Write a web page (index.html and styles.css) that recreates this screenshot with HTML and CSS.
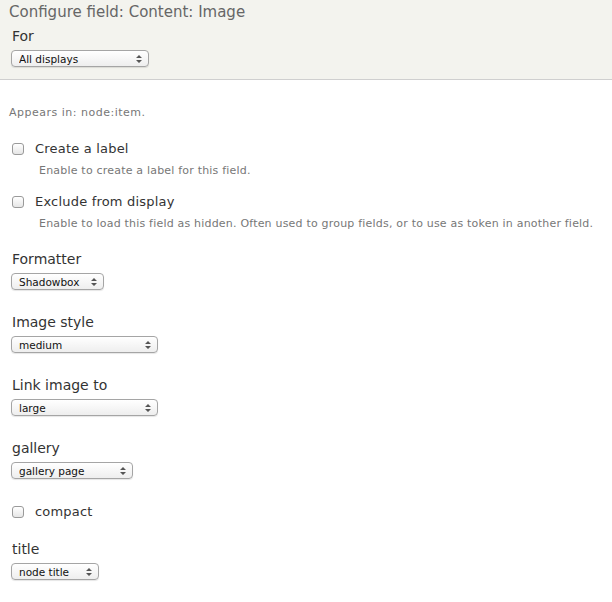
FILE: index.html
```html
<!DOCTYPE html>
<html lang="en">
<head>
  <meta charset="UTF-8">
  <title>Configure field</title>
  <link rel="stylesheet" href="styles.css">
</head>
<body>

  <div class="top-bar">
    <h1>Configure field: Content: Image</h1>
    <div class="field">
      <label>For</label>
      <span class="select-wrap w-for">
        <select><option>All displays</option></select>
        <svg class="arrows" width="6" height="8" viewBox="0 0 6 8"><path d="M3 0L6 3H0z M3 8L0 5H6z" fill="#555"/></svg>
      </span>
    </div>
  </div>

  <div class="settings">
    <p class="appears">Appears in: node:item.</p>

    <div class="check-row">
      <label><input type="checkbox"> Create a label</label>
      <div class="desc">Enable to create a label for this field.</div>
    </div>

    <div class="check-row">
      <label><input type="checkbox"> Exclude from display</label>
      <div class="desc">Enable to load this field as hidden. Often used to group fields, or to use as token in another field.</div>
    </div>

    <div class="field">
      <label>Formatter</label>
      <span class="select-wrap w-formatter">
        <select><option>Shadowbox</option></select>
        <svg class="arrows" width="6" height="8" viewBox="0 0 6 8"><path d="M3 0L6 3H0z M3 8L0 5H6z" fill="#555"/></svg>
      </span>
    </div>

    <div class="field">
      <label>Image style</label>
      <span class="select-wrap w-wide">
        <select><option>medium</option></select>
        <svg class="arrows" width="6" height="8" viewBox="0 0 6 8"><path d="M3 0L6 3H0z M3 8L0 5H6z" fill="#555"/></svg>
      </span>
    </div>

    <div class="field">
      <label>Link image to</label>
      <span class="select-wrap w-wide">
        <select><option>large</option></select>
        <svg class="arrows" width="6" height="8" viewBox="0 0 6 8"><path d="M3 0L6 3H0z M3 8L0 5H6z" fill="#555"/></svg>
      </span>
    </div>

    <div class="field">
      <label>gallery</label>
      <span class="select-wrap w-gallery">
        <select><option>gallery page</option></select>
        <svg class="arrows" width="6" height="8" viewBox="0 0 6 8"><path d="M3 0L6 3H0z M3 8L0 5H6z" fill="#555"/></svg>
      </span>
    </div>

    <div class="check-row compact">
      <label><input type="checkbox"> compact</label>
    </div>

    <div class="field">
      <label>title</label>
      <span class="select-wrap w-title">
        <select><option>node title</option></select>
        <svg class="arrows" width="6" height="8" viewBox="0 0 6 8"><path d="M3 0L6 3H0z M3 8L0 5H6z" fill="#555"/></svg>
      </span>
    </div>
  </div>

</body>
</html>
```

FILE: styles.css
```css
body {
  margin: 0;
  font-family: "DejaVu Sans", Verdana, sans-serif;
  color: #333;
  background-color: white;
}

.top-bar {
  background-color: #f3f3ee;
  border-bottom: 1px solid #cfcfcf;
  padding: 3px 9px 12px;
}

h1 {
  margin: 0;
  font-size: 15px;
  font-weight: normal;
  color: #666;
  line-height: 18px;
}

.field {
  padding-left: 3px;
}

.field label {
  display: block;
  font-size: 14px;
  line-height: 18px;
  margin-bottom: 5px;
}

.top-bar .field label {
  margin-top: 6px;
  margin-bottom: 5px;
}

.select-wrap {
  position: relative;
  display: block;
  margin-left: -1px;
}

.select-wrap select {
  -webkit-appearance: none;
  appearance: none;
  width: 100%;
  height: 17px;
  border: 1px solid #a5a5a5;
  border-radius: 4px;
  background: linear-gradient(#ffffff, #eeeeee);
  box-shadow: 0 1px 1px rgba(0, 0, 0, 0.1);
  font-family: "DejaVu Sans", sans-serif;
  font-size: 10.5px;
  color: #111;
  padding: 0 0 0 7px;
  margin: 0;
  display: block;
}

.select-wrap .arrows {
  position: absolute;
  right: 7px;
  top: 5px;
  pointer-events: none;
}

.w-for { width: 138px; }
.w-formatter { width: 93px; }
.w-wide { width: 147px; }
.w-gallery { width: 122px; }
.w-title { width: 88px; }

.settings {
  padding: 0 9px;
}

.appears {
  font-size: 11px;
  letter-spacing: 0.5px;
  line-height: 13px;
  color: #777;
  margin: 26px 0 21px;
}

.check-row {
  margin-bottom: 14px;
}

.check-row.compact {
  margin-top: 24px;
  margin-bottom: 15px;
}

.check-row label {
  display: flex;
  align-items: center;
  gap: 11px;
  font-size: 13px;
  letter-spacing: 0.2px;
  line-height: 18px;
  padding-left: 3px;
}

.check-row input {
  -webkit-appearance: none;
  appearance: none;
  width: 12px;
  height: 12px;
  margin: 0;
  border: 1px solid #9a9a9a;
  border-radius: 3px;
  background: linear-gradient(#ffffff, #e6e6e6);
}

.desc {
  font-size: 11px;
  letter-spacing: 0.2px;
  line-height: 16px;
  color: #777;
  margin: 5px 0 0 30px;
}

.settings .field {
  margin-bottom: 23px;
}

.check-row + .field {
  padding-top: 4px;
}
```
